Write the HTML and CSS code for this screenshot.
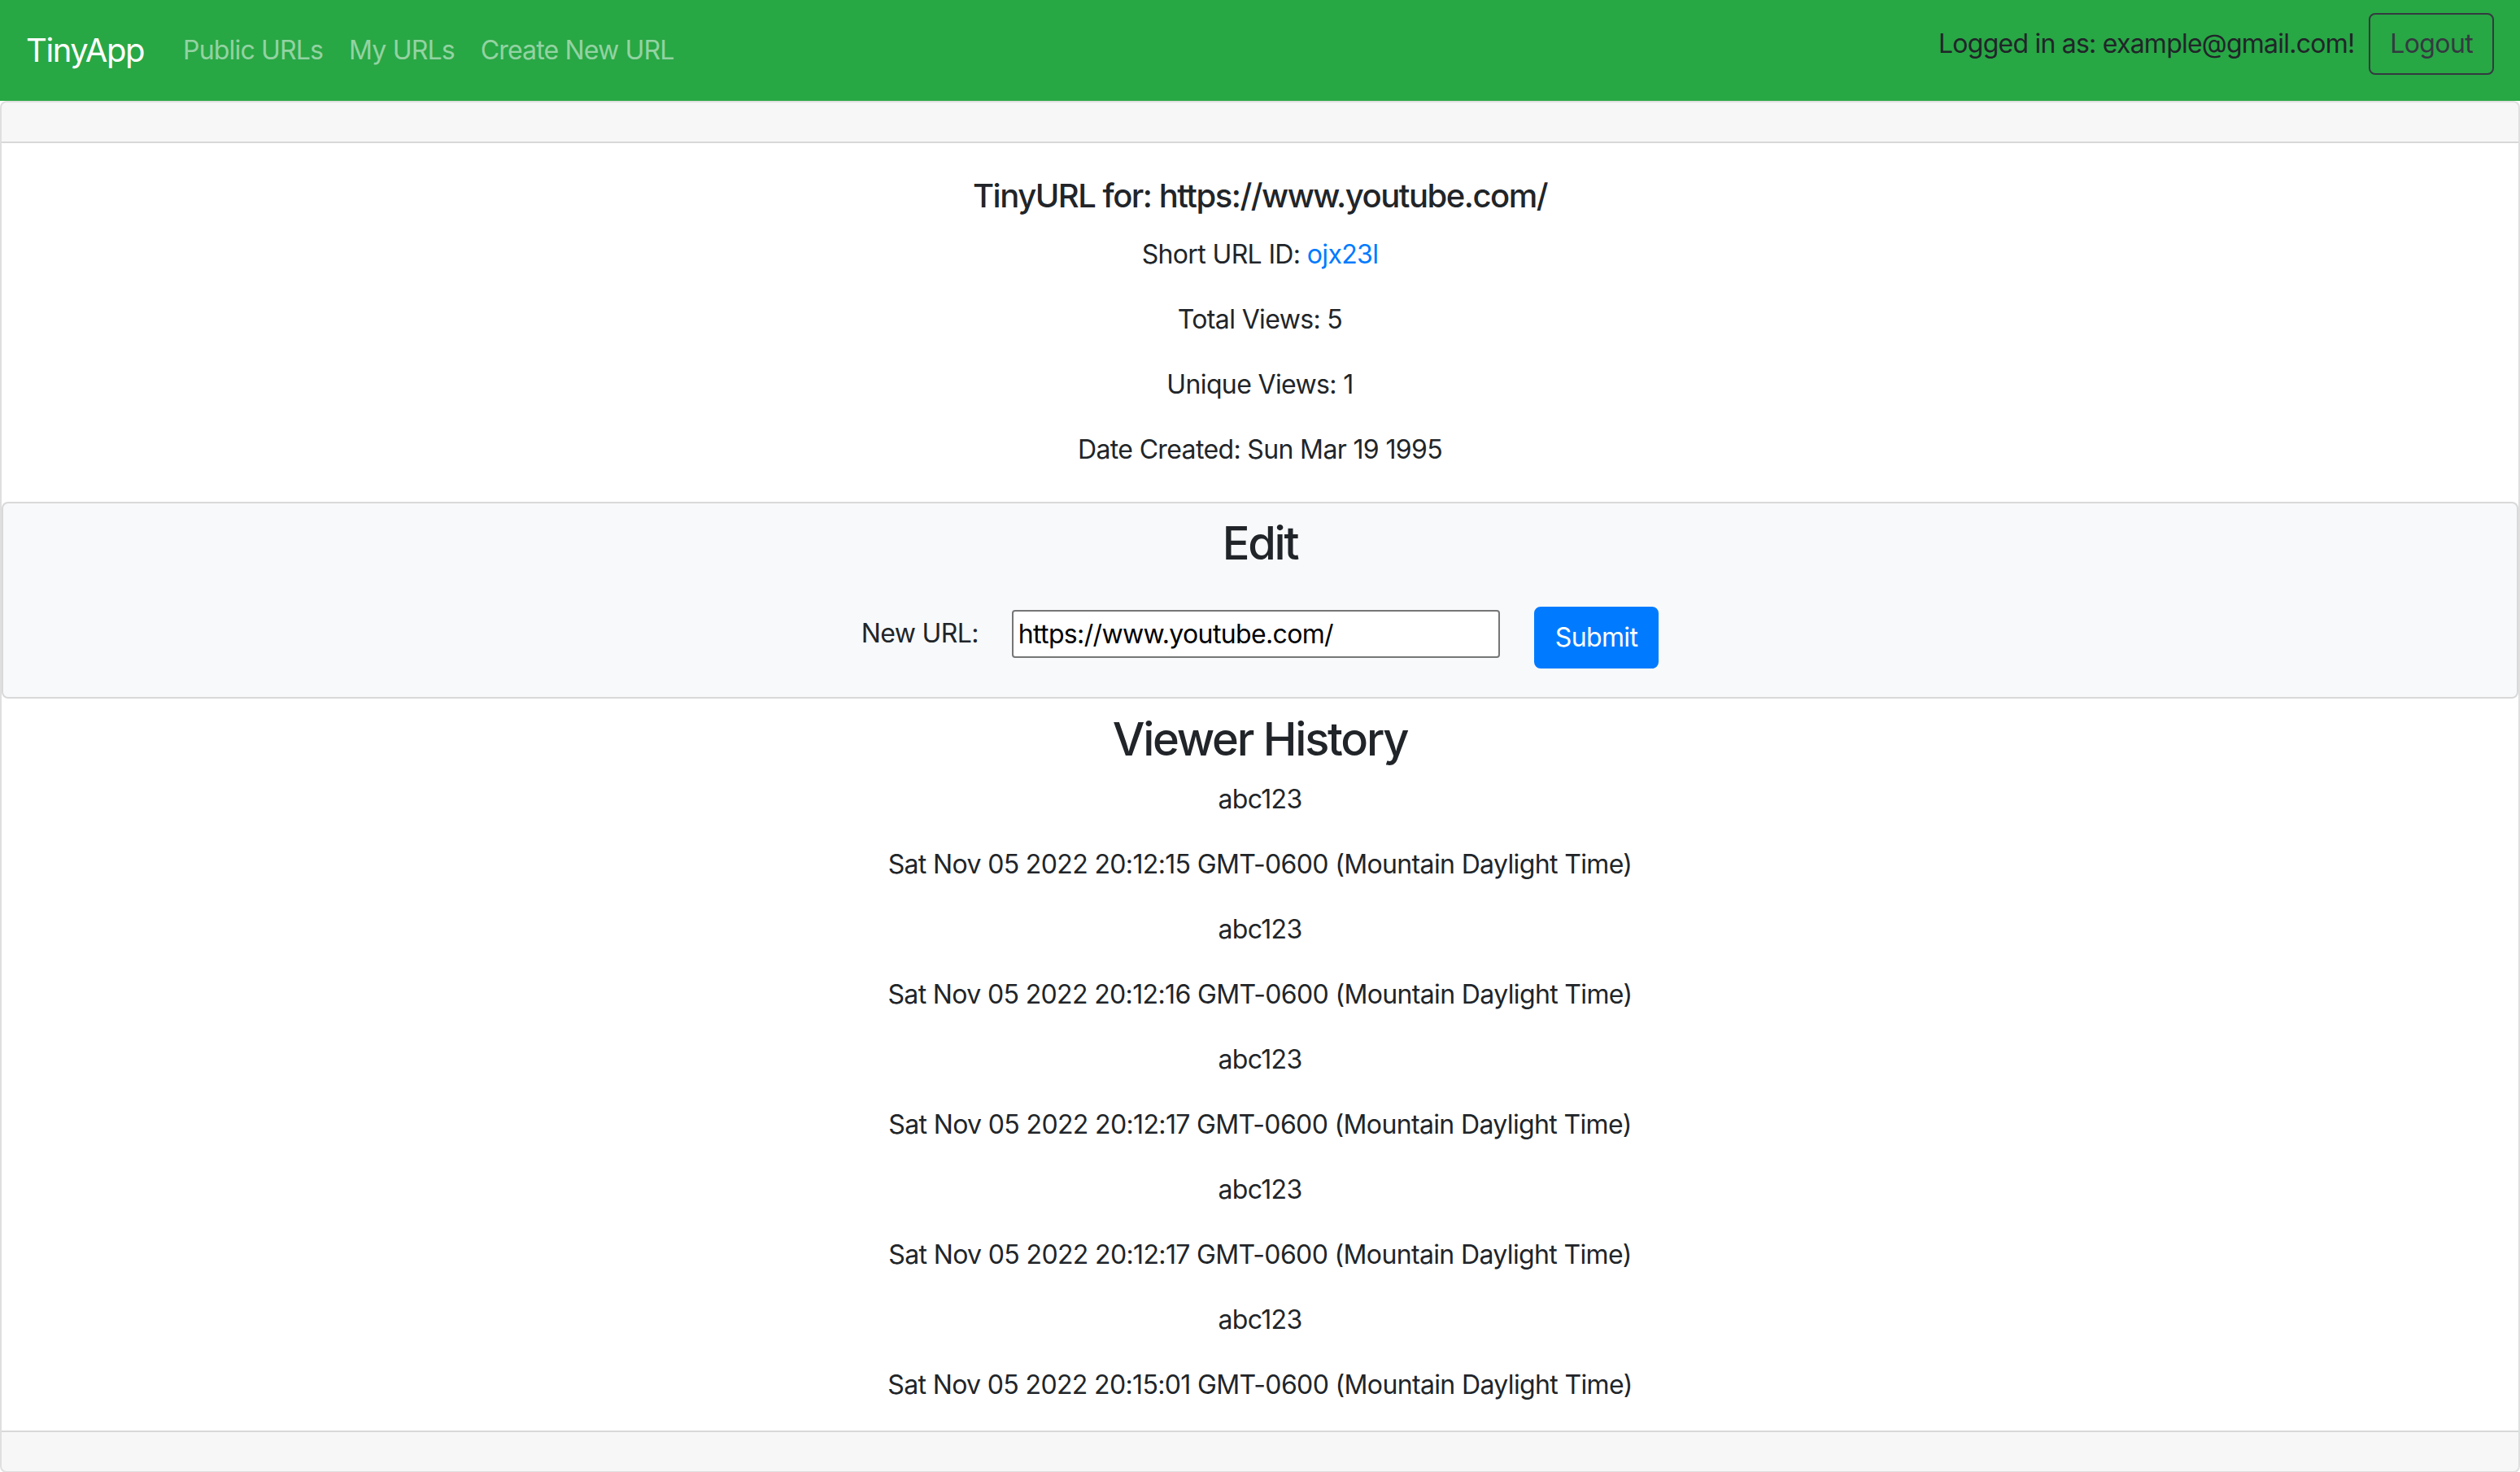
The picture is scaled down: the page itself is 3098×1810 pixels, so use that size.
FILE: index.html
```html
<!DOCTYPE html>
<html lang="en">
<head>
<meta charset="utf-8">
<title>TinyApp</title>
<link rel="stylesheet" href="styles.css">
</head>
<body>
<nav class="navbar">
  <div class="nav-left">
    <a class="brand" href="#">TinyApp</a>
    <ul class="nav-links">
      <li><a href="#">Public URLs</a></li>
      <li><a href="#">My URLs</a></li>
      <li><a href="#">Create New URL</a></li>
    </ul>
  </div>
  <div class="nav-right">
    <span class="user">Logged in as: example@gmail.com!</span>
    <button class="btn-outline" type="button">Logout</button>
  </div>
</nav>
<main class="card">
  <div class="card-header"></div>
  <div class="card-body">
    <h5 class="card-title">TinyURL for: https://www.youtube.com/</h5>
    <p>Short URL ID: <a href="#">ojx23l</a></p>
    <p>Total Views: 5</p>
    <p>Unique Views: 1</p>
    <p class="last">Date Created: Sun Mar 19 1995</p>
  </div>
  <section class="edit-box">
    <h3 class="section-title">Edit</h3>
    <form class="edit-form">
      <label class="edit-label" for="newurl">New URL:</label>
      <input class="edit-input" id="newurl" type="text" value="https://www.youtube.com/">
      <button class="btn-primary" type="button">Submit</button>
    </form>
  </section>
  <section class="history">
    <h3 class="section-title">Viewer History</h3>
    <p>abc123</p>
    <p>Sat Nov 05 2022 20:12:15 GMT-0600 (Mountain Daylight Time)</p>
    <p>abc123</p>
    <p>Sat Nov 05 2022 20:12:16 GMT-0600 (Mountain Daylight Time)</p>
    <p>abc123</p>
    <p>Sat Nov 05 2022 20:12:17 GMT-0600 (Mountain Daylight Time)</p>
    <p>abc123</p>
    <p>Sat Nov 05 2022 20:12:17 GMT-0600 (Mountain Daylight Time)</p>
    <p>abc123</p>
    <p>Sat Nov 05 2022 20:15:01 GMT-0600 (Mountain Daylight Time)</p>
  </section>
  <div class="card-footer"></div>
</main>
</body>
</html>
```

FILE: styles.css
```css
* { box-sizing: border-box; }
html, body { margin: 0; padding: 0; }
body {
  font-family: "Inter", "Liberation Sans", sans-serif;
  font-size: 32px;
  line-height: 48px;
  letter-spacing: -0.02em;
  color: #212529;
  background: #fff;
}
a { text-decoration: none; }

.navbar {
  height: 124px;
  background: #28a745;
  padding: 16px 32px;
  display: flex;
  justify-content: space-between;
  align-items: flex-start;
}
.nav-left {
  display: flex;
  align-items: center;
  margin-top: 6px;
}
.brand {
  color: #fff;
  font-size: 40px;
  line-height: 60px;
  letter-spacing: -0.035em;
  padding: 10px 0;
  margin-right: 32px;
}
.nav-links {
  list-style: none;
  margin: 0;
  padding: 0;
  display: flex;
}
.nav-links a {
  display: block;
  padding: 16px 16px;
  letter-spacing: -0.026em;
  color: rgba(255,255,255,0.5);
}
.nav-right {
  display: flex;
  align-items: baseline;
  gap: 18px;
}
.user { color: #212529; letter-spacing: -0.024em; }
.btn-outline {
  font: inherit;
  letter-spacing: inherit;
  color: #343a40;
  background: transparent;
  border: 2px solid #343a40;
  border-radius: 8px;
  padding: 12px 24px;
  line-height: 48px;
}

.card {
  display: block;
  border: 2px solid rgba(0,0,0,0.125);
  border-radius: 8px;
  overflow: hidden;
  text-align: center;
}
.card-header {
  height: 50px;
  background: rgba(0,0,0,0.03);
  border-bottom: 2px solid rgba(0,0,0,0.125);
}
.card-footer {
  height: 50px;
  background: rgba(0,0,0,0.03);
  border-top: 2px solid rgba(0,0,0,0.125);
}
.card-body { padding: 41px 40px 40px; }
.card-title {
  font-size: 40px;
  line-height: 48px;
  font-weight: 500;
  letter-spacing: -0.037em;
  margin: 0 0 24px;
}
p { margin: 0 0 32px; }
p.last { margin-bottom: 0; }
.card-body a { color: #007bff; }

.edit-box {
  background: #f8f9fa;
  border: 2px solid rgba(0,0,0,0.125);
  border-radius: 8px;
  padding: 16px 0 35px;
  margin-bottom: 17px;
}
.section-title {
  font-size: 56px;
  line-height: 67px;
  font-weight: 500;
  letter-spacing: -0.04em;
  margin: 0 0 16px;
}
.edit-box .section-title { margin-bottom: 44px; }
.edit-form {
  display: flex;
  justify-content: center;
  align-items: flex-start;
}
.edit-label { margin: 9px 41px 0 0; }
.edit-input {
  width: 600px;
  height: 59px;
  font: inherit;
  font-size: 32px;
  letter-spacing: inherit;
  line-height: normal;
  color: #000;
  background: #fff;
  border: 2px solid #767676;
  border-radius: 4px;
  padding: 0 6px;
  margin: 4px 42px 0 0;
}
.btn-primary {
  font: inherit;
  letter-spacing: inherit;
  color: #fff;
  background: #007bff;
  border: 2px solid #007bff;
  border-radius: 8px;
  padding: 12px 24px;
  line-height: 48px;
}
```
